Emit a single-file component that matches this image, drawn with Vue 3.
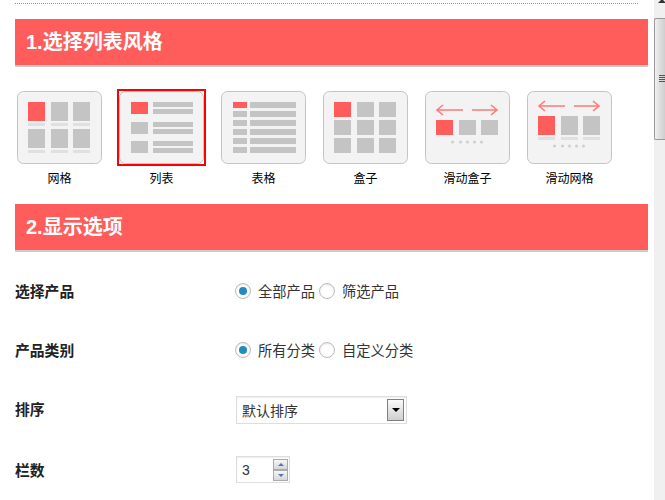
<script setup>
const RED = '#ff5c5c'
const GREY = '#c4c4c4'
const LIGHT = '#e0e0e0'

const cols = [11, 34, 56]

function gridRects(y0, h, barH) {
  const out = []
  cols.forEach((x) => {
    out.push({ x, y: y0, w: 17, h, c: GREY })
    if (barH) out.push({ x, y: y0 + h + 2, w: 17, h: barH, c: LIGHT })
  })
  return out
}
function markFirst(rects) {
  rects[0].c = RED
  return rects
}

const listRects = []
;[[11, 12], [31, 12], [50, 12]].forEach(([y, h], i) => {
  listRects.push({ x: 12, y, w: 17, h, c: i === 0 ? RED : GREY })
  listRects.push({ x: 34, y, w: 40, h: 5, c: GREY })
  listRects.push({ x: 34, y: y + 7, w: 40, h: 5, c: GREY })
})

const tableRects = []
;[11, 20, 29, 38, 47, 56].forEach((y, i) => {
  tableRects.push({ x: 12, y, w: 14, h: 6, c: i === 0 ? RED : GREY })
  tableRects.push({ x: 29, y, w: 46, h: 6, c: GREY })
})

const dotsX = [27.5, 35.5, 42.5, 49.5, 56.5]

const styles = [
  { name: '网格', rects: markFirst([...gridRects(11, 19, 3), ...gridRects(38, 19, 3)]) },
  { name: '列表', rects: listRects, selected: true },
  { name: '表格', rects: tableRects },
  { name: '盒子', rects: markFirst([...gridRects(11, 15), ...gridRects(29, 15), ...gridRects(47, 15)]) },
  { name: '滑动盒子', rects: markFirst(gridRects(29, 15)), arrowY: 19, dotY: 51 },
  { name: '滑动网格', rects: markFirst(gridRects(25, 19, 3)), arrowY: 15, dotY: 55 },
]

const radioRows = [
  { label: '选择产品', options: ['全部产品', '筛选产品'] },
  { label: '产品类别', options: ['所有分类', '自定义分类'] },
]
</script>

<template>
  <div class="page">
    <main class="content">
      <div class="dotted"></div>

      <h2 class="section first">1.选择列表风格</h2>
      <ul class="gallery">
        <li v-for="s in styles" :key="s.name" class="item" :class="{ selected: s.selected }">
          <div class="frame">
            <svg class="card" width="85" height="73" viewBox="0 0 85 73">
              <rect x="0.5" y="0.5" width="84" height="72" rx="6" fill="#f3f3f3" stroke="#c4c4c4" />
              <rect v-for="(r, i) in s.rects" :key="i" :x="r.x" :y="r.y" :width="r.w" :height="r.h" :fill="r.c" />
              <g v-if="s.arrowY" fill="none" stroke="#ff7a7a" stroke-width="1.6">
                <path :d="`M38 ${s.arrowY}H13M18 ${s.arrowY - 5}L12 ${s.arrowY}L18 ${s.arrowY + 5}`" />
                <path :d="`M47 ${s.arrowY}H72M66 ${s.arrowY - 5}L72 ${s.arrowY}L66 ${s.arrowY + 5}`" />
              </g>
              <g v-if="s.dotY">
                <circle v-for="x in dotsX" :key="x" :cx="x" :cy="s.dotY" r="1.5" fill="#cfcfcf" />
              </g>
            </svg>
          </div>
          <span class="item-name">{{ s.name }}</span>
        </li>
      </ul>

      <h2 class="section">2.显示选项</h2>
      <div class="form">
        <div v-for="row in radioRows" :key="row.label" class="row">
          <span class="label">{{ row.label }}</span>
          <div class="radios">
            <label v-for="(opt, i) in row.options" :key="opt" class="radio-opt">
              <span class="radio" :class="{ on: i === 0 }"></span>{{ opt }}
            </label>
          </div>
        </div>

        <div class="row">
          <span class="label">排序</span>
          <div class="select">
            <span>默认排序</span>
            <span class="select-btn"><i class="tri-down"></i></span>
          </div>
        </div>

        <div class="row">
          <span class="label">栏数</span>
          <div class="number">
            <span>3</span>
            <span class="spin">
              <span class="spin-btn"><i class="spin-up"></i></span>
              <span class="spin-btn"><i class="spin-down"></i></span>
            </span>
          </div>
        </div>
      </div>
    </main>

    <aside class="scrollbar">
      <div class="scroll-arrow"><i></i></div>
      <div class="thumb"><div class="grip"></div></div>
    </aside>
  </div>
</template>

<style>
html, body {
  margin: 0;
  background: #fff;
}
</style>

<style scoped>
.page {
  display: flex;
  width: 665px;
  height: 500px;
  overflow: hidden;
  background: #fff;
  font-family: "Liberation Sans", "Noto Sans CJK SC", sans-serif;
  color: #333;
}
.content {
  width: 639px;
  padding: 3px 0 0 15px;
  flex: none;
}
.dotted {
  width: 623px;
  border-top: 1px dotted #999;
}
.section {
  width: 622px;
  height: 46px;
  margin: 0;
  padding-left: 11px;
  line-height: 46px;
  font-size: 20px;
  font-weight: 700;
  color: #fff;
  background: #ff5c5c;
  border-bottom: 2px solid #ccc;
}
.section.first {
  margin-top: 15px;
}
.gallery {
  display: flex;
  gap: 13px;
  list-style: none;
  margin: 22px 0 16px;
  padding: 0;
}
.item {
  width: 89px;
  text-align: center;
}
.frame {
  width: 85px;
  height: 73px;
  border: 2px solid transparent;
}
.selected .frame {
  border-color: #f00;
}
.card {
  display: block;
}
.item-name {
  display: block;
  height: 18px;
  margin-top: 4px;
  line-height: 18px;
  font-size: 12px;
  color: #000;
}
.form {
  padding-top: 10px;
}
.row {
  display: flex;
  align-items: center;
  height: 59px;
}
.row:last-child {
  height: 61px;
}
.label {
  width: 220px;
  flex: none;
  padding-bottom: 2px;
  font-size: 14.8px;
  font-weight: 700;
  color: #222;
}
.row:last-child .label {
  padding-bottom: 0;
}
.radios {
  display: flex;
  gap: 4px;
  padding-bottom: 2px;
  font-size: 14.25px;
}
.radio-opt {
  display: flex;
  align-items: center;
  gap: 7px;
}
.radio {
  display: flex;
  align-items: center;
  justify-content: center;
  box-sizing: border-box;
  width: 16px;
  height: 16px;
  border: 1px solid #bbb;
  border-radius: 50%;
  background: #fff;
  box-shadow: inset 0 1px 2px rgba(0, 0, 0, 0.1);
}
.radio.on::after {
  content: "";
  width: 8px;
  height: 8px;
  border-radius: 50%;
  background: #1e8cbe;
}
.select,
.number {
  display: flex;
  align-items: center;
  box-sizing: border-box;
  margin-left: 1px;
  padding-left: 5px;
  border: 1px solid #ddd;
  box-shadow: inset 0 1px 2px rgba(0, 0, 0, 0.07);
  font-size: 14px;
  color: #333;
  background: #fff;
}
.select {
  justify-content: space-between;
  width: 171px;
  height: 28px;
  padding-right: 2px;
}
.select-btn {
  display: flex;
  align-items: center;
  justify-content: center;
  box-sizing: border-box;
  width: 17px;
  height: 22px;
  border: 1px solid #808080;
  background: linear-gradient(#fafafa, #cfcfcf);
}
.tri-down {
  width: 0;
  height: 0;
  border-left: 4px solid transparent;
  border-right: 4px solid transparent;
  border-top: 4px solid #000;
}
.number {
  justify-content: space-between;
  width: 54px;
  height: 27px;
  padding-right: 1px;
}
.spin {
  display: flex;
  flex-direction: column;
}
.spin-btn {
  display: flex;
  align-items: center;
  justify-content: center;
  box-sizing: border-box;
  width: 15px;
  height: 11px;
  border: 1px solid #aaa;
  background: linear-gradient(#f6f6f6, #d6d6d6);
}
.spin-up,
.spin-down {
  width: 0;
  height: 0;
  border-left: 3px solid transparent;
  border-right: 3px solid transparent;
}
.spin-up {
  border-bottom: 3px solid #5a6fc0;
}
.spin-down {
  border-top: 3px solid #5a6fc0;
}
.scrollbar {
  width: 11px;
  height: 500px;
  flex: none;
  background: #f0f0f0;
}
.scroll-arrow {
  position: relative;
  height: 18px;
  overflow: hidden;
}
.scroll-arrow i {
  display: block;
  width: 0;
  height: 0;
  margin: -1px 0 0 4px;
  border-left: 4px solid transparent;
  border-right: 4px solid transparent;
  border-bottom: 4px solid #333;
}
.thumb {
  display: flex;
  align-items: center;
  box-sizing: border-box;
  width: 11px;
  height: 122px;
  padding-left: 4px;
  border: 1px solid #999;
  border-right: 0;
  border-radius: 2px 0 0 2px;
  background: linear-gradient(90deg, #f2f2f2, #e4e4e4 30%, #cfcfcf);
}
.grip {
  width: 7px;
  height: 8px;
  background: repeating-linear-gradient(#555 0 1px, transparent 1px 2px);
}
</style>
